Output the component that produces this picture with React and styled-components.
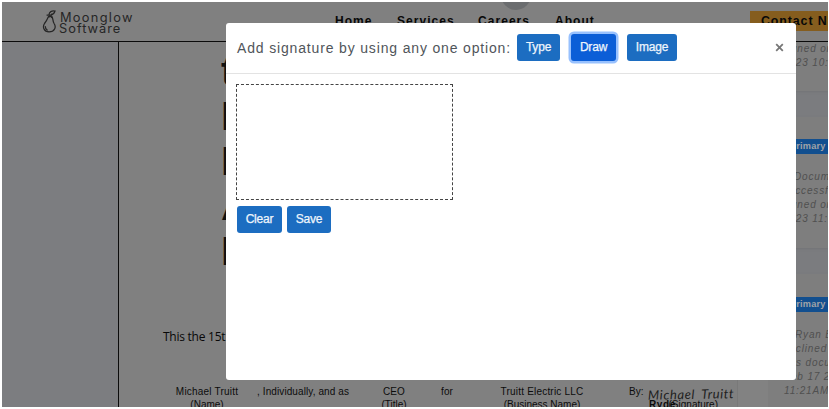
import React from "react";
import styled, { createGlobalStyle } from "styled-components";

const Global = createGlobalStyle`
  * { box-sizing: border-box; }
  body { margin: 0; background: #fff; font-family: "Liberation Sans", Arial, sans-serif; overflow: hidden; }
`;

const Screen = styled.div`
  width: 829px;
  height: 409px;
  padding: 2px 1px 2px 2px;
  position: relative;
  overflow: hidden;
`;

const Page = styled.div`
  height: 405px;
  background: #808080;
  display: flex;
  flex-direction: column;
  overflow: hidden;
`;

const Header = styled.header`
  height: 40px;
  flex: none;
  border-bottom: 1px solid #0b0b0b;
  display: flex;
  overflow: hidden;
  position: relative;
`;

const Brand = styled.div`
  display: flex;
  width: 333px;
  padding: 7px 0 0 40px;
`;

const BrandName = styled.div`
  color: #262626;
  font: 400 12.8px/11px Inter, sans-serif;
  letter-spacing: 1px;
  padding-top: 3px;
  span { display: block; }
  span:first-child { padding-left: 1px; letter-spacing: 1.3px; }
`;

const Nav = styled.nav`
  display: flex;
  width: 415px;
  padding-top: 11px;
`;

const NavLink = styled.a`
  width: ${(p) => p.$w}px;
  flex: none;
  color: #080808;
  font-size: 12px;
  font-weight: 700;
  line-height: 17px;
  letter-spacing: 1.05px;
`;

const Contact = styled.a`
  flex: 1;
  height: 20px;
  margin-top: 9px;
  padding-left: 11px;
  background: #855d1e;
  color: #080808;
  font-size: 12.4px;
  font-weight: 700;
  line-height: 20px;
  letter-spacing: 0.9px;
  white-space: nowrap;
  overflow: hidden;
`;

const Bubble = styled.span`
  position: absolute;
  left: 499px;
  top: -22px;
  width: 30px;
  height: 30px;
  border-radius: 50%;
  background: #6b6d6f;
`;

const Content = styled.div`
  flex: 1;
  min-height: 0;
  display: flex;
`;

const Rail = styled.aside`
  width: 117px;
  flex: none;
  background: #7c7d80;
  border-right: 1px solid #0c0c0c;
`;

const Paper = styled.main`
  width: 619px;
  flex: none;
  border-right: 1px solid #797979;
  overflow: hidden;
`;

const Title = styled.div`
  padding: 7px 0 0 102px;
  height: 284px;
  color: #101010;
  font-size: 41px;
  font-weight: 700;
  line-height: 45px;
  opacity: 0.99;
  span { display: block; }
`;

const Sentence = styled.p`
  margin: 0;
  padding-left: 44px;
  height: 54px;
  color: #080808;
  font: 12px/22px "Open Sans", sans-serif;
  letter-spacing: -0.25px;
`;

const Signers = styled.div`
  display: grid;
  grid-template-columns: 138px 106px 62px 44px 146px 33px 90px;
  padding-top: 5px;
  color: #0c0c0c;
  font-size: 10px;
  line-height: 13px;
  white-space: nowrap;
`;

const Signer = styled.div`
  padding-left: ${(p) => p.$pl || 0}px;
  text-align: ${(p) => p.$align || "center"};
  letter-spacing: ${(p) => p.$ls ?? 0.1}px;
  div + div { letter-spacing: 0; }
`;

const Signature = styled.div`
  position: relative;
  padding: 13px 20px 0 0;
  text-align: right;
`;

const Script = styled.span`
  position: absolute;
  left: 0;
  top: 1px;
  color: #202020;
  font: italic 400 13px/16px Lato, sans-serif;
  letter-spacing: 0.6px;
  word-spacing: 3px;
  transform: rotate(-1deg);
`;

const Signee = styled.b`
  position: absolute;
  left: 1px;
  top: 13px;
  letter-spacing: 0.6px;
`;

const Gutter = styled.div`
  width: 30px;
  flex: none;
  background: #828282;
`;

const Feed = styled.aside`
  flex: 1;
  min-width: 0;
  background: #7b7c7f;
  overflow: hidden;
`;

const Card = styled.section`
  height: ${(p) => p.$h}px;
  margin-bottom: 26px;
  padding-top: ${(p) => p.$pt}px;
  background: #7e7e7e;
  box-shadow: 0 1px 2px #737477;
`;

const Badge = styled.div`
  height: 15px;
  margin: 0 0 16px 16px;
  padding-left: 6px;
  background: #124f8f;
  color: #a0a3a7;
  font-size: 9.2px;
  font-weight: 700;
  line-height: 15px;
  letter-spacing: 0.2px;
`;

const Line = styled.div`
  height: 14px;
  padding-left: ${(p) => p.$x}px;
  color: #505050;
  font-size: 10px;
  font-style: italic;
  line-height: 14px;
  letter-spacing: 0.85px;
  white-space: nowrap;
`;

const Modal = styled.div`
  position: absolute;
  left: 226px;
  top: 23px;
  width: 570px;
  height: 357px;
  background: #fff;
  border-radius: 3px;
`;

const ModalHead = styled.div`
  height: 51px;
  border-bottom: 1px solid #e3e3e3;
  display: flex;
  align-items: center;
  padding: 0 11px 1px 11px;
`;

const Prompt = styled.h5`
  margin: 0;
  width: 280px;
  flex: none;
  color: #50555a;
  font-size: 14px;
  font-weight: 400;
  letter-spacing: 0.84px;
  white-space: nowrap;
`;

const Button = styled.button`
  width: ${(p) => p.$w}px;
  height: 27px;
  flex: none;
  padding: 0;
  margin-right: ${(p) => p.$gap ?? 11}px;
  border: 0;
  border-radius: 3px;
  background: ${(p) => (p.$active ? "#0b5ed7" : "#1c6dc1")};
  box-shadow: ${(p) => (p.$active ? "0 0 0 2.5px #98c1fe" : "none")};
  color: #eef5fc;
  font: 12px/27px "Liberation Sans", Arial, sans-serif;
  letter-spacing: -0.2px;
  -webkit-text-stroke: 0.25px #eef5fc;
`;

const Close = styled.button`
  margin-left: auto;
  width: 10px;
  height: 12px;
  padding: 0;
  border: 0;
  background: none;
  display: flex;
  align-items: center;
`;

const Pad = styled.div`
  width: 217px;
  height: 116px;
  margin: 10px 0 6px 10px;
  border: 1px dashed #444;
`;

const Actions = styled.div`
  display: flex;
  padding-left: 11px;
`;

export default function App() {
  return (
    <Screen>
      <Global />
      <Page>
        <Header>
          <Brand>
            <svg width="17" height="25" viewBox="0 0 17 25" fill="none" stroke="#262626" strokeWidth="1.25" strokeLinecap="round">
              <path d="M6.5 7.5C5 11 4.5 12 2.5 14.5C.2 18 2 22.7 7 22.8C12.7 22.8 14.5 18 12.1 14.5C10.3 11.5 11.3 8.5 9.5 7" />
              <path d="M7 5.5C7.3 3 9.5 1.5 13 2C12.2 4.7 10 6 7.5 6.2M5 6L8 6L9.5 8.5M10 5L7 8M3.3 17.5C3.3 19 4 20.3 5.2 21" />
            </svg>
            <BrandName><span>Moonglow</span><span>Software</span></BrandName>
          </Brand>
          <Nav>
            <NavLink $w={62}>Home</NavLink>
            <NavLink $w={81}>Services</NavLink>
            <NavLink $w={77}>Careers</NavLink>
            <NavLink $w={60}>About</NavLink>
          </Nav>
          <Contact>Contact N</Contact>
          <Bubble />
        </Header>
        <Content>
          <Rail />
          <Paper>
            <Title><span>t</span><span>E</span><span>E</span><span>A</span><span>E</span></Title>
            <Sentence>This the 15t</Sentence>
            <Signers>
              <Signer $pl={38} $ls={0.2}><div>Michael Truitt</div><div>(Name)</div></Signer>
              <Signer $align="left">, Individually, and as</Signer>
              <Signer><div>CEO</div><div>(Title)</div></Signer>
              <Signer>for</Signer>
              <Signer $ls={0.2}><div>Truitt Electric LLC</div><div>(Business Name)</div></Signer>
              <Signer $align="left" $pl={14}>By:</Signer>
              <Signature>
                <Script>Michael Truitt</Script>
                <Signee>Ryde</Signee>
                (Signature)
              </Signature>
            </Signers>
          </Paper>
          <Gutter />
          <Feed>
            <Card $h={49} $pt={0}>
              <Line $x={14}>signed on</Line>
              <Line $x={15}>2023 10:4</Line>
            </Card>
            <Card $h={131} $pt={22}>
              <Badge>Primary</Badge>
              <Line $x={26}>Docume</Line>
              <Line $x={15}>successfu</Line>
              <Line $x={14}>signed on</Line>
              <Line $x={15}>2023 11:0</Line>
            </Card>
            <Card $h={140} $pt={23}>
              <Badge>Primary</Badge>
              <Line $x={27}>Ryan B</Line>
              <Line $x={15}>declined</Line>
              <Line $x={15}>this docu</Line>
              <Line $x={16}>Feb 17 20</Line>
              <Line $x={16}>11:21AM</Line>
            </Card>
          </Feed>
        </Content>
      </Page>
      <Modal>
        <ModalHead>
          <Prompt>Add signature by using any one option:</Prompt>
          <Button $w={43}>Type</Button>
          <Button $w={45} $active>Draw</Button>
          <Button $w={50}>Image</Button>
          <Close aria-label="Close">
            <svg width="9" height="9" viewBox="0 0 9 9" stroke="#777" strokeWidth="1.8"><path d="M1.2 1.2L7.8 7.8M7.8 1.2L1.2 7.8" /></svg>
          </Close>
        </ModalHead>
        <Pad />
        <Actions>
          <Button $w={45} $gap={5}>Clear</Button>
          <Button $w={44}>Save</Button>
        </Actions>
      </Modal>
    </Screen>
  );
}
